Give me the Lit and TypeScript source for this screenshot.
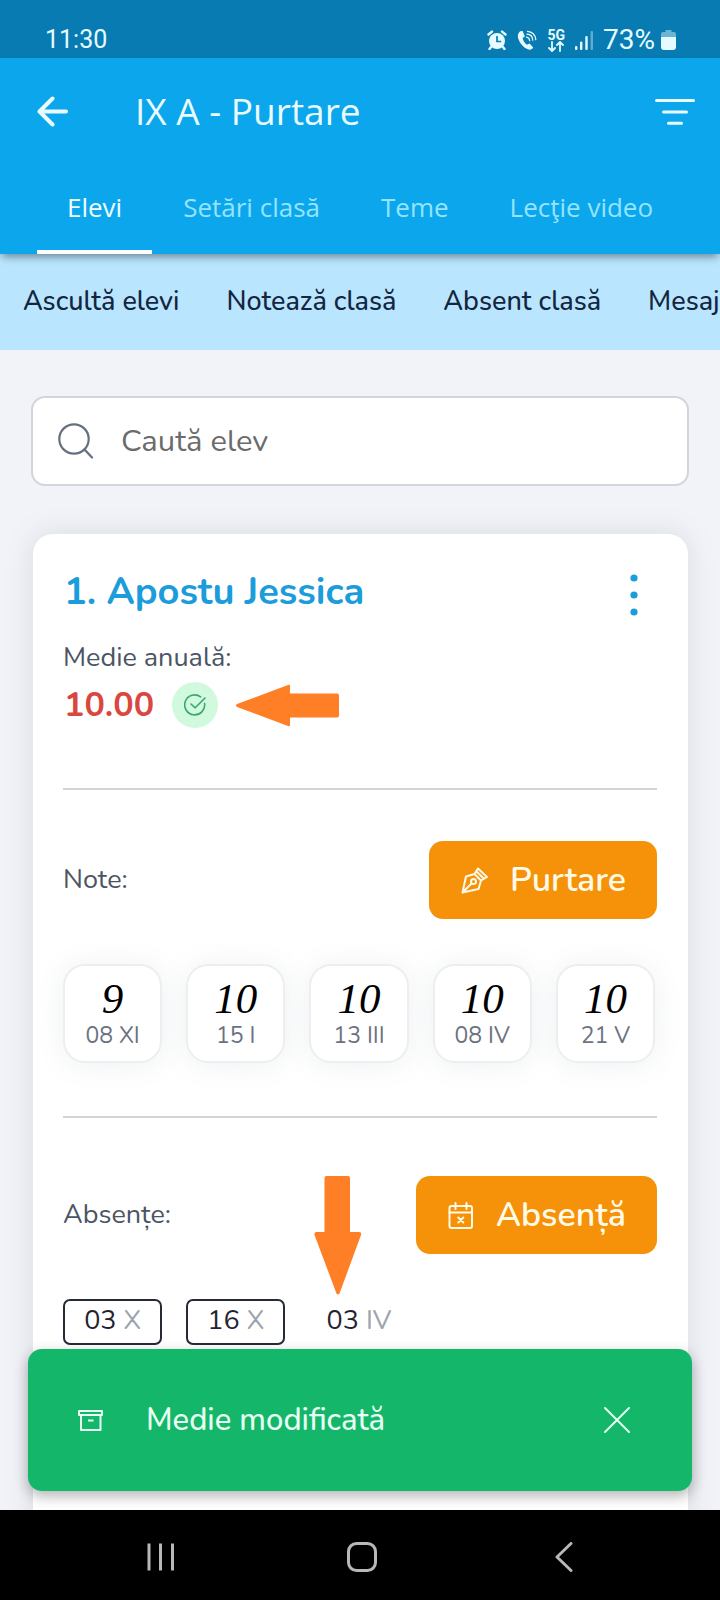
import { LitElement, html, svg, css } from "lit";
import { customElement, state } from "lit/decorators.js";
import { classMap } from "lit/directives/class-map.js";

interface Grade {
  value: string;
  date: string;
}

interface Absence {
  day: string;
  month: string;
  outlined: boolean;
}

const TABS = ["Elevi", "Setări clasă", "Teme", "Lecţie video"];
const ACTIONS = ["Ascultă elevi", "Notează clasă", "Absent clasă", "Mesaj"];

const GRADES: Grade[] = [
  { value: "9", date: "08 XI" },
  { value: "10", date: "15 I" },
  { value: "10", date: "13 III" },
  { value: "10", date: "08 IV" },
  { value: "10", date: "21 V" },
];

const ABSENCES: Absence[] = [
  { day: "03", month: "X", outlined: true },
  { day: "16", month: "X", outlined: true },
  { day: "03", month: "IV", outlined: false },
];

@customElement("status-bar")
class StatusBar extends LitElement {
  static styles = css`
    :host {
      display: flex;
      align-items: flex-end;
      justify-content: space-between;
      box-sizing: border-box;
      height: 58px;
      padding: 0 44px 2px 45px;
      background: #077bb2;
      color: #e6fbff;
      font: 400 25px/32px Roboto, "Liberation Sans", sans-serif;
    }
    .tray {
      display: flex;
      align-items: center;
      gap: 10px;
    }
    .network {
      display: flex;
      flex-direction: column;
      align-items: center;
      font-size: 14px;
      line-height: 12px;
      font-weight: 700;
    }
    .power {
      display: flex;
      align-items: center;
      gap: 6px;
      font-size: 28px;
    }
    svg {
      display: block;
    }
  `;

  render() {
    return html`
      <span>11:30</span>
      <div class="tray">
        <svg width="20" height="20" viewBox="0 0 20 20" fill="none" stroke="currentColor" stroke-linecap="round">
          <circle cx="10" cy="11" r="8" fill="currentColor" stroke="none" />
          <path d="M1.5 4.5 5 1.6M18.5 4.5 15 1.6M4.5 16.5 2.5 19M15.5 16.5 17.500 19" stroke-width="2.4" />
          <path d="M10 6.500V11.500H13.500" stroke="#077bb2" stroke-width="1.7" />
        </svg>
        <svg width="20" height="20" viewBox="0 0 20 20" fill="none" stroke="currentColor" stroke-linecap="round">
          <path
            d="M3.200 1.200C1 3 .200 5.600 1.400 9c1.700 4.900 5 8.600 9.400 10.300 2.300.800 4.200.200 5.400-1.700l-3.600-4.200-2.800 1.300C7.700 13 6 10.500 5.600 8L7.900 6.500 5.600 1Z"
            fill="currentColor" stroke="none" />
          <path d="M9.500 7.200c1.800.200 3 1.500 3.200 3.500M10 4.200c3.300.200 5.600 2.600 5.800 6M10.500 1.300c4.500.200 8 3.700 8.300 8.300" stroke-width="1.3" />
        </svg>
        <div class="network">
          <span>5G</span>
          <svg width="16" height="11" viewBox="0 0 16 11" fill="none" stroke="currentColor" stroke-width="1.800" stroke-linecap="round" stroke-linejoin="round">
            <path d="M4 1v8.500M1 7l3 3 3-3M12 10V1.500M9 4l3-3 3 3" />
          </svg>
        </div>
        <svg width="18" height="20" viewBox="1 0 18 20" fill="currentColor">
          <rect x="1" y="16" width="2.400" height="4" rx="1" />
          <rect x="6" y="11.500" width="2.400" height="8.500" rx="1" />
          <rect x="11.300" y="6" width="2.400" height="14" rx="1" />
          <rect x="16.600" y="1" width="2.400" height="19" rx="1" opacity="0.400" />
        </svg>
        <div class="power">
          <span>73%</span>
          <svg width="15" height="20" viewBox="0 0 15 20" fill="currentColor">
            <path d="M4.500 0h6v2H13a2 2 0 0 1 2 2v4H0V4a2 2 0 0 1 2-2h2.500Z" opacity="0.450" />
            <path d="M0 7h15v10a3 3 0 0 1-3 3H3a3 3 0 0 1-3-3Z" />
          </svg>
        </div>
      </div>
    `;
  }
}

@customElement("student-card")
class StudentCard extends LitElement {
  static styles = css`
    :host {
      display: block;
      position: relative;
      box-sizing: border-box;
      min-height: 1060px;
      padding: 34px 31px 48px 30px;
      border-radius: 20px;
      background: #fff;
      box-shadow: 0 0 28px rgba(100, 116, 139, 0.18);
      color: #4b5563;
      font-size: 27px;
      line-height: 40px;
    }
    svg {
      display: block;
    }
    button {
      font: inherit;
      border: 0;
      cursor: pointer;
    }
    .head,
    .average {
      display: flex;
      align-items: center;
      padding-left: 1px;
    }
    .head {
      justify-content: space-between;
    }
    h2 {
      margin: 0;
      color: #1b9cdb;
      font-size: 38px;
      line-height: 48px;
      font-weight: 700;
    }
    .more {
      padding: 6px 19px 0;
      background: none;
      color: #1b9cdb;
    }
    .label {
      margin: 0;
    }
    .head + .label {
      margin-top: 22px;
    }
    .average {
      height: 46px;
      margin-top: 4px;
    }
    .value {
      color: #d9483f;
      font-size: 34px;
      font-weight: 700;
    }
    .badge {
      display: grid;
      place-items: center;
      width: 46px;
      height: 46px;
      margin: 0 18px;
      border-radius: 50%;
      background: #d0f9de;
      color: #3aa76d;
    }
    hr {
      height: 2px;
      margin: 60px 0 51px;
      border: 0;
      background: #d3d4d8;
    }
    .grades + hr {
      margin: 53px 0 58px;
    }
    .row {
      display: flex;
      align-items: center;
      justify-content: space-between;
    }
    .primary {
      display: flex;
      align-items: center;
      gap: 22px;
      height: 78px;
      padding: 0 31px 0 32px;
      border-radius: 14px;
      background: #f6910a;
      color: #fffbe6;
      font-size: 34px;
      font-weight: 600;
    }
    .grades,
    .absences {
      display: grid;
      grid-template-columns: repeat(5, 1fr);
      gap: 24px;
      margin: 45px 2px 0 0;
      padding: 0;
      list-style: none;
      text-align: center;
    }
    .grade {
      box-sizing: border-box;
      height: 99px;
      padding-top: 12px;
      border: 2px solid #eceef0;
      border-radius: 22px;
      background: #fff;
      box-shadow: 0 2px 28px rgba(100, 116, 139, 0.11);
    }
    .mark {
      display: block;
      color: #000;
      font: italic 400 43px/42px "Liberation Serif", serif;
    }
    .date {
      display: block;
      color: #6b7280;
      font-size: 23px;
      line-height: 32px;
    }
    .absence {
      box-sizing: border-box;
      height: 46px;
      border: 2px solid transparent;
      border-radius: 7px;
      color: #1f2430;
      line-height: 40px;
    }
    .outlined {
      border-color: #252a36;
    }
    .month {
      color: #9ca3af;
    }
    .pointer {
      position: absolute;
      left: 281px;
      top: 642px;
    }
  `;

  render() {
    return html`
      <div class="head">
        <h2>1. Apostu Jessica</h2>
        <button class="more" aria-label="Opțiuni">
          <svg width="8" height="42" viewBox="0 0 8 42" fill="currentColor">
            <circle cx="4" cy="4" r="3.600" /><circle cx="4" cy="21" r="3.600" /><circle cx="4" cy="38" r="3.600" />
          </svg>
        </button>
      </div>
      <p class="label">Medie anuală:</p>
      <div class="average">
        <span class="value">10.00</span>
        <span class="badge">
          <svg width="22" height="22" viewBox="0 0 22 22" fill="none" stroke="currentColor" stroke-width="1.600" stroke-linecap="round" stroke-linejoin="round">
            <path d="M20.600 9.500A10 10 0 1 1 16.600 2.800M7 10l4.200 3.800L21 4" />
          </svg>
        </span>
        <svg width="104" height="43" viewBox="0 0 104 43" fill="#ff7f27">
          <path d="M1 20 52 1Q54 0 54 2V9.500H101Q103 9.500 103 11.500V31.500Q103 33.500 101 33.500H54V41Q54 43 52 42L1 23Q-1 21.500 1 20Z" />
        </svg>
      </div>
      <hr />
      <div class="row">
        <p class="label">Note:</p>
        <button class="primary">
          <svg width="27" height="27" viewBox="0 0 27 27" fill="none" stroke="currentColor" stroke-width="2" stroke-linejoin="round" stroke-linecap="round">
            <path d="M1.500 25.500 5 9.500 13.500 7 20 13.500 17.500 22ZM2 25 10.500 16.500M13.500 7 17 1.500 26 10 20 13.500M15.300 4.200 23 11.800" />
            <circle cx="12.500" cy="14.500" r="2.500" />
          </svg>
          Purtare
        </button>
      </div>
      <ul class="grades">
        ${GRADES.map((g) => html`<li class="grade"><span class="mark">${g.value}</span><span class="date">${g.date}</span></li>`)}
      </ul>
      <hr />
      <div class="row">
        <p class="label">Absențe:</p>
        <button class="primary">
          <svg width="26" height="27" viewBox="0 0 26 27" fill="none" stroke="currentColor" stroke-width="2" stroke-linecap="round" stroke-linejoin="round">
            <rect x="1.500" y="4" width="22.500" height="22" rx="2" />
            <path d="M1.500 10.500H24M7.500 1v6M18.500 1v6M10.300 15.500l5 5M15.300 15.500l-5 5" />
          </svg>
          Absență
        </button>
      </div>
      <ul class="absences">
        ${ABSENCES.map(
          (a) => html`<li class=${classMap({ absence: true, outlined: a.outlined })}>${a.day} <span class="month">${a.month}</span></li>`
        )}
      </ul>
      <svg class="pointer" width="48" height="119" viewBox="0 0 48 119" fill="#ff7f27">
        <path d="M12.500 0H34Q36 0 36 2V56H45Q48 56 47 59L25.500 117.500Q24 119.500 22.500 117.500L.500 59Q0 56 2.500 56H10.500V2Q10.500 0 12.500 0Z" />
      </svg>
    `;
  }
}

@customElement("app-root")
class AppRoot extends LitElement {
  @state() private activeTab = 0;
  @state() private toastOpen = true;

  static styles = css`
    :host {
      display: flex;
      flex-direction: column;
      height: 100vh;
      background: #f2f3f8;
      font-family: Nunito, Lato, "Open Sans", sans-serif;
    }
    svg {
      display: block;
    }
    button {
      padding: 0;
      border: 0;
      background: none;
      color: inherit;
      font: inherit;
      cursor: pointer;
    }
    .header {
      position: relative;
      z-index: 1;
      flex: none;
      background: #0ca6ed;
      box-shadow: 0 5px 8px -2px rgba(0, 0, 0, 0.4);
      color: #e9fbff;
      font-family: "Open Sans", "Noto Sans", sans-serif;
    }
    .appbar {
      display: flex;
      align-items: center;
      height: 105px;
      padding: 0 24px 0 37px;
    }
    h1 {
      flex: 1;
      margin: 0 0 0 66px;
      font-size: 37px;
      line-height: 48px;
      font-weight: 400;
    }
    .tabs {
      display: flex;
      gap: 1px;
      height: 91px;
      padding-left: 37px;
      font-size: 26px;
    }
    .tab {
      padding: 0 30px;
      border-bottom: 4px solid transparent;
      color: #95e4ff;
    }
    .active {
      border-bottom-color: #fff;
      color: #f0fdff;
    }
    .actions {
      display: flex;
      flex: none;
      align-items: center;
      gap: 47px;
      box-sizing: border-box;
      height: 96px;
      padding: 0 0 2px 23px;
      overflow: hidden;
      background: #b9e5fe;
      color: #14253f;
      font-size: 27px;
      font-weight: 500;
      white-space: nowrap;
    }
    .main {
      position: relative;
      flex: 1;
      min-height: 0;
      overflow: hidden;
    }
    .list {
      display: flex;
      flex-direction: column;
      gap: 48px;
      padding: 46px 31px;
    }
    .search {
      display: flex;
      align-items: center;
      gap: 27px;
      box-sizing: border-box;
      height: 90px;
      padding: 0 25px;
      border: 2px solid #d3d5dc;
      border-radius: 14px;
      background: #fff;
      color: #64707f;
    }
    input {
      flex: 1;
      min-width: 0;
      padding: 0;
      border: 0;
      outline: 0;
      background: none;
      color: #374151;
      font: inherit;
      font-size: 31px;
    }
    input::placeholder {
      color: #6b6b6b;
      opacity: 1;
    }
    student-card {
      margin: 0 1px 0 2px;
    }
    .toast {
      position: absolute;
      right: 28px;
      bottom: 19px;
      left: 28px;
      display: flex;
      align-items: center;
      box-sizing: border-box;
      height: 142px;
      padding: 0 62px 0 50px;
      border-radius: 14px;
      background: #14b76a;
      box-shadow: 0 5px 14px rgba(0, 0, 0, 0.3);
      color: #e8fff3;
      font-size: 31px;
      font-weight: 500;
    }
    .message {
      flex: 1;
      margin-left: 43px;
    }
    .system {
      display: flex;
      flex: none;
      height: 90px;
      padding: 0 56px 0 60px;
      background: #000;
      color: #b8b8b8;
    }
    .key {
      display: grid;
      flex: 1;
      place-items: center;
      padding-top: 4px;
    }
  `;

  private key(label: string, shape: unknown) {
    return html`<button class="key" aria-label=${label}>
      <svg width="30" height="30" viewBox="0 0 30 30" fill="none" stroke="currentColor" stroke-width="3" stroke-linecap="round" stroke-linejoin="round">${shape}</svg>
    </button>`;
  }

  render() {
    return html`
      <status-bar></status-bar>
      <header class="header">
        <div class="appbar">
          <button aria-label="Înapoi">
            <svg width="32" height="32" viewBox="0 0 32 32" fill="none" stroke="currentColor" stroke-width="4" stroke-linecap="round" stroke-linejoin="round">
              <path d="M29 16.500H4M15.500 3.500 2.500 16.500 15.500 29.500" />
            </svg>
          </button>
          <h1>IX A - Purtare</h1>
          <button aria-label="Filtrează">
            <svg width="42" height="28" viewBox="0 0 42 28" fill="none" stroke="currentColor" stroke-width="3" stroke-linecap="round">
              <path d="M2.500 3.500H39.500M9.500 15H32.500M14.500 26.300H27.500" />
            </svg>
          </button>
        </div>
        <nav class="tabs">
          ${TABS.map(
            (t, i) => html`<button
              class=${classMap({ tab: true, active: i === this.activeTab })}
              @click=${() => (this.activeTab = i)}
            >${t}</button>`
          )}
        </nav>
      </header>
      <div class="actions">${ACTIONS.map((a) => html`<button>${a}</button>`)}</div>
      <main class="main">
        <div class="list">
          <label class="search">
            <svg width="36" height="36" viewBox="0 0 36 36" fill="none" stroke="currentColor" stroke-width="2.200" stroke-linecap="round">
              <circle cx="16" cy="16" r="14.700" /><path d="M26.500 26.500 34 34.500" />
            </svg>
            <input type="search" placeholder="Caută elev" aria-label="Caută elev" />
          </label>
          <student-card></student-card>
        </div>
        ${this.toastOpen
          ? html`<div class="toast" role="status">
              <svg width="25" height="21" viewBox="0 0 25 21" fill="none" stroke="currentColor" stroke-width="2" stroke-linejoin="round">
                <path d="M1 1H24V5H1ZM3 5V20H22.500V5M10 10.500H15.500" />
              </svg>
              <span class="message">Medie modificată</span>
              <button aria-label="Închide" @click=${() => (this.toastOpen = false)}>
                <svg width="26" height="26" viewBox="0 0 26 26" fill="none" stroke="currentColor" stroke-width="1.900" stroke-linecap="round">
                  <path d="M1 1 25 25M25 1 1 25" />
                </svg>
              </button>
            </div>`
          : null}
      </main>
      <nav class="system">
        ${this.key("Recente", svg`<path d="M3 1.500V28.500M14.500 1.500V28.500M26.500 1.500V28.500" stroke-linecap="butt" />`)}
        ${this.key("Acasă", svg`<rect x="1.500" y="1.500" width="27" height="27" rx="8" />`)}
        ${this.key("Înapoi", svg`<path d="M23 1.500 9 15 23 28.500" />`)}
      </nav>
    `;
  }
}
